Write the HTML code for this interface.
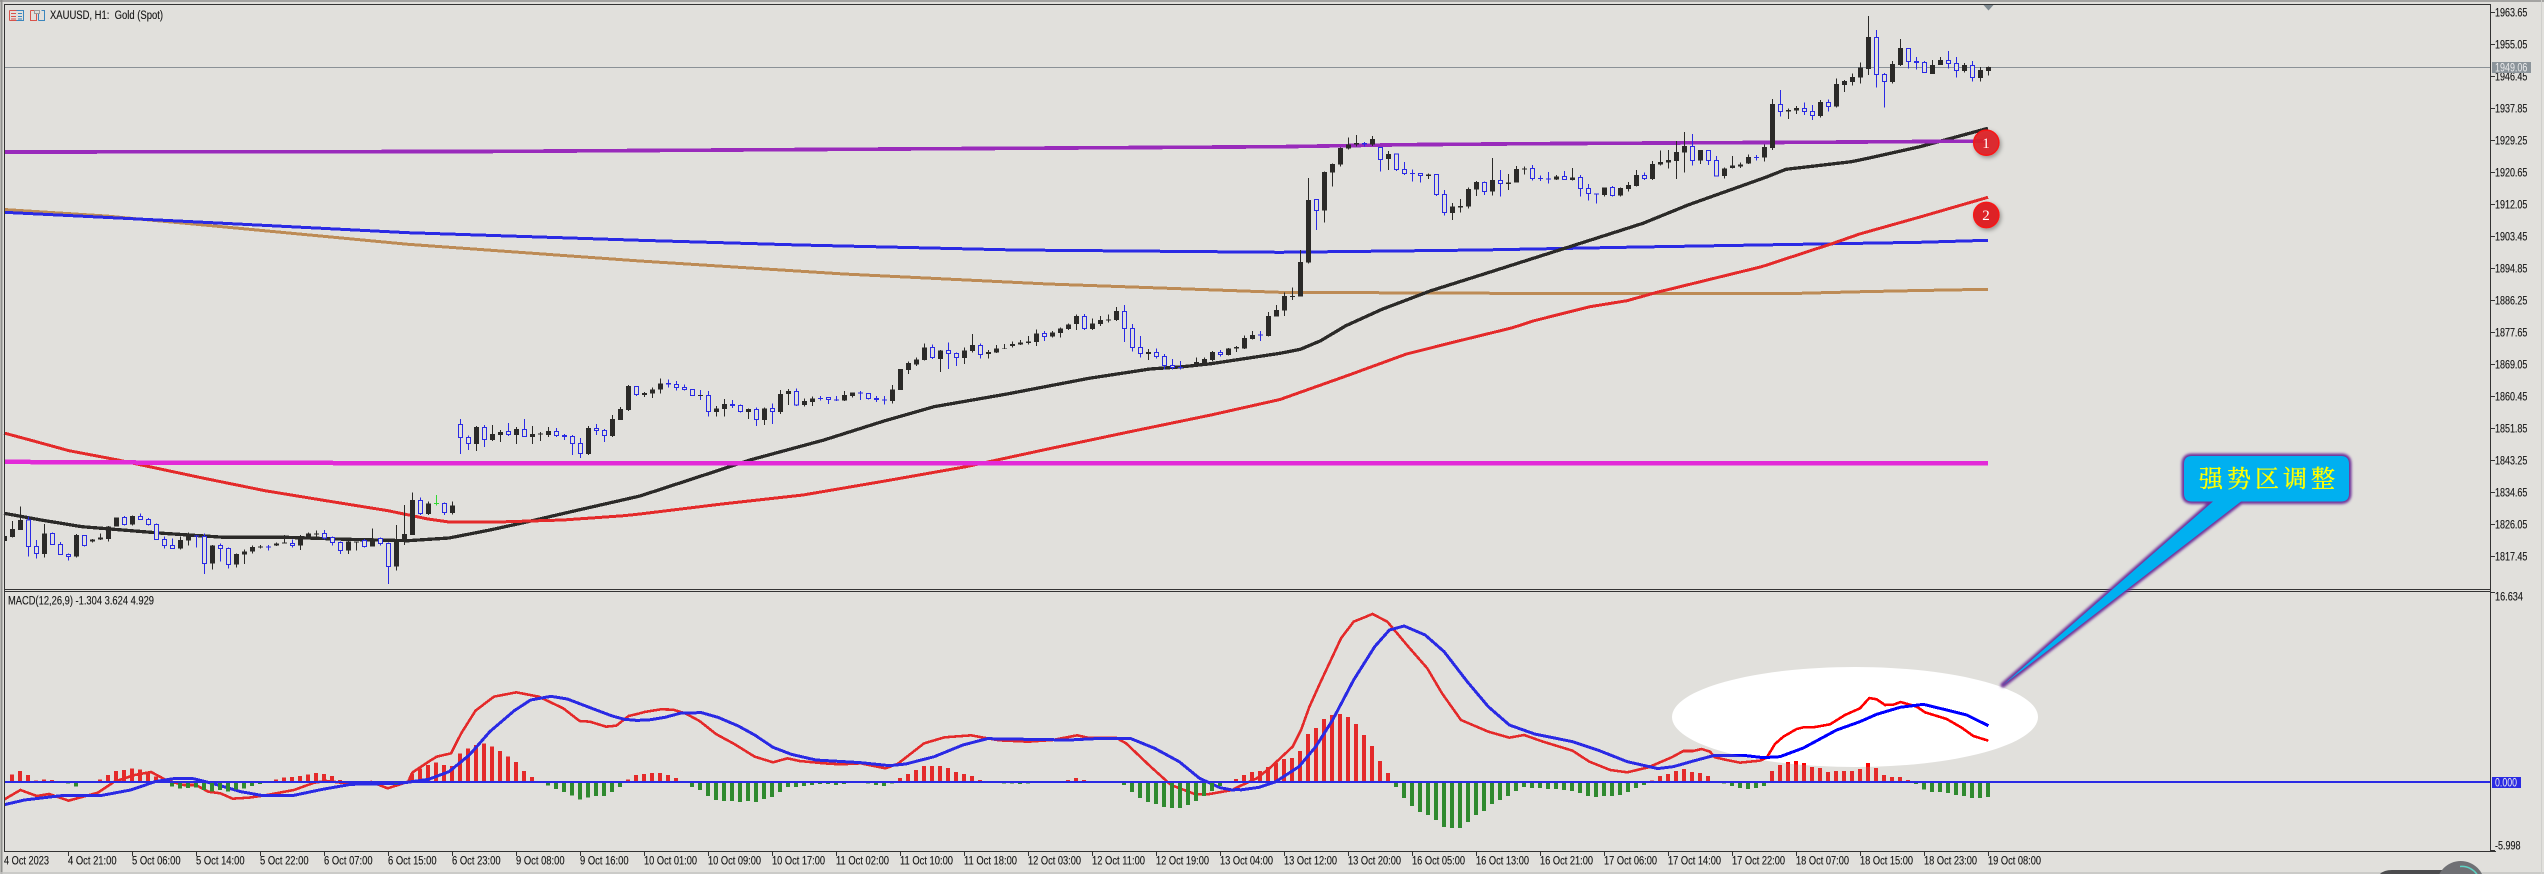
<!DOCTYPE html>
<html><head><meta charset="utf-8"><title>XAUUSD H1</title>
<style>
html,body{margin:0;padding:0;background:#e1e0dc;width:2544px;height:874px;overflow:hidden}
svg{display:block}
.c,.c *{vector-effect:non-scaling-stroke;shape-rendering:crispEdges}
.kw{stroke:#2b2a28;stroke-width:1;fill:none}
.kb{stroke:#2b2a28;stroke-width:5;fill:none}
.bw{stroke:#2a2ae4;stroke-width:1;fill:none}
.bs{stroke:#2a2ae4;stroke-width:5;fill:none}
.bh{stroke:#2a2ae4;stroke-width:1;fill:#e1e0dc}
.hr{stroke:var(--r,#e42a2a);stroke-width:4;fill:none}
.hg{stroke:#2f8a2f;stroke-width:4;fill:none}
.mr{stroke:var(--r,#e42a2a);stroke-width:2.6;fill:none;stroke-linejoin:round}
.mb{stroke:var(--b,#2a2ae4);stroke-width:3;fill:none;stroke-linejoin:round}
.ln{fill:none}
text{font-family:"Liberation Sans",sans-serif;font-size:11.5px;fill:#141414;stroke:#141414;stroke-width:.12}
.cn{font-family:"Liberation Serif","Noto Serif CJK SC",serif;font-size:24px;fill:#ffff00;stroke:#ffff00;stroke-width:.35;letter-spacing:4px}
</style></head>
<body>
<svg xmlns="http://www.w3.org/2000/svg" width="2544" height="874" viewBox="0 0 2544 874">
<defs>
<clipPath id="ec"><ellipse cx="1855" cy="717" rx="183" ry="50"/></clipPath>
<filter id="bl" x="-20%" y="-20%" width="140%" height="140%"><feGaussianBlur stdDeviation="1.2"/></filter>
<filter id="sh" x="-40%" y="-40%" width="180%" height="180%"><feDropShadow dx="1.5" dy="2" stdDeviation="2" flood-color="#000" flood-opacity=".35"/></filter>
</defs>
<rect width="2544" height="874" fill="#e1e0dc"/>
<!-- window edges -->
<path d="M0 1H2544" stroke="#a4a4a2" stroke-width="2"/>
<path d="M1.500 0V874" stroke="#8f8f8d" stroke-width="2"/>
<path d="M0 873H2544" stroke="#c4c4c2" stroke-width="1.5"/>
<path d="M2541.5 0V874" stroke="#cfcfcc" stroke-width="1"/>

<!-- white ellipse -->
<ellipse cx="1855" cy="717" rx="183" ry="50" fill="#fff"/>

<!-- current price line -->
<path class="c" d="M5 67.5H2490" stroke="#8a9196" stroke-width="1"/>

<!-- moving averages and horizontal lines -->
<g class="c">
<polyline class="ln" stroke="#bd8b55" stroke-width="3" points="4,209.5 106,216 204,225 408,244.3 640,261 844,274 1048,284 1280,292.3 1500,293.3 1800,293.3 1862,291.7 1920,290.5 1988,289.3"/>
<polyline class="ln" stroke="#2a2ae4" stroke-width="3" points="4,212.3 204,222.3 408,232.7 640,240.3 800,245 1016,250 1280,252.3 1480,250 1640,247 1800,244.3 1920,242.3 1988,240.3"/>
<polyline class="ln" stroke="#2b2a28" stroke-width="3.3" points="4,513.3 41,520 82,526.7 163,533.3 224,537.3 286,537.3 347,539.3 408,540.7 449,538 490,530 531,521 571,511.7 640,496 693,478.7 750,460 824,440 885,420.7 934,406.7 1007,394 1089,378.3 1150,369 1183,366.7 1211,363.7 1280,353.3 1300.4,349.3 1320.8,340.7 1345.3,326 1382,309.3 1431,290.7 1484,274 1561.6,249.3 1643,223.3 1688,205 1765.7,177.3 1786,169.3 1814.7,166 1851.4,161.7 1867.8,158.3 1920,146.7 1988,128.3"/>
<polyline class="ln" stroke="#e42a2a" stroke-width="3" points="4,433 30,440 69,450.7 118,460 204,478.3 265,490.7 326,500.7 388,510.7 428,519 449,522 498,522 563,520 624,515.7 640,514 722,504 803,495 885,481 966,466.7 1048,449 1130,431.7 1211,415 1280,399.5 1349,375 1406.5,354 1459.6,340.7 1512.6,327.7 1533,321 1590,306.7 1627,300.7 1655.5,292.7 1761.6,266.7 1831,244 1859.6,234 1920,217 1988,197.3"/>
<polyline class="ln" stroke="#992bbb" stroke-width="3.7" points="4,152 477,151.5 1280,146.7 1405,144.7 1533,143.7 1661,143 1805,142.3 1900,141.7 1988,141"/>
<polyline class="ln" stroke="#e22ad8" stroke-width="4.5" points="4,461.7 56,462.3 449,463.3 1988,463.5"/>
</g>

<!-- candles -->
<g class="c">
<rect x="5" y="536" width="2" height="5" fill="#2b2a28"/>
<g transform="translate(0 440) scale(1 .33333)">
<path class="kw" d="M12.5 243V293M20.5 200V270M44.5 252V352M76.5 282V352M92.5 297V308M100.5 280V300M108.5 258V305M132.5 226V256M180.5 290V328M188.5 277V317M212.5 315V388M236.5 340V382M244.5 328V372M252.5 316V340M260.5 315V325M276.5 308V318M284.5 285V310M300.5 285V330M308.5 277V294M316.5 272V290M348.5 295V342M356.5 305V332M372.5 265V320M396.5 255V392M404.5 195V315M412.5 157V285M428.5 185V225M452.5 185V224"/>
<path class="kb" d="M12.5 267V291M20.5 240V270M44.5 280V342M76.5 285V350M92.5 298V305M100.5 293V298M108.5 260V297M116.5 232V260M132.5 228V254M180.5 300V326M188.5 285V302M212.5 316V371M236.5 342V373M244.5 334V344M252.5 321V335M260.5 319V322M276.5 310V316M284.5 308V311M300.5 294V317M308.5 280V293M316.5 280V283M348.5 305V332M356.5 305V308M372.5 296V320M396.5 300V380M404.5 282V305M412.5 180V285M428.5 190V222M452.5 196V219"/>
<path class="bw" d="M28.5 230V350M36.5 300V355M52.5 278V315M60.5 306V345M68.5 340V362M84.5 285V320M124.5 228V256M140.5 220V240M148.5 234V256M156.5 250V300M164.5 290V325M172.5 295V326M196.5 285V323M204.5 280V402M220.5 310V365M228.5 322V385M268.5 315V332M292.5 298V322M324.5 270V298M332.5 290V317M340.5 305V342M364.5 297V322M380.5 292V316M388.5 308V432M420.5 172V225M444.5 187V225"/>
<path class="bs" d="M196.5 286V289M268.5 319V323"/>
<path class="bh" d="M26.5 240h4V320h-4zM34.5 319h4V341h-4zM50.5 280h4V314h-4zM58.5 313h4V344h-4zM66.5 343h4V350h-4zM82.5 287h4V317h-4zM122.5 232h4V254h-4zM138.5 230h4V238h-4zM146.5 238h4V254h-4zM154.5 253h4V298h-4zM162.5 298h4V316h-4zM170.5 316h4V325h-4zM202.5 290h4V370h-4zM218.5 316h4V325h-4zM226.5 325h4V373h-4zM290.5 311h4V317h-4zM322.5 281h4V294h-4zM330.5 293h4V307h-4zM338.5 307h4V331h-4zM362.5 301h4V319h-4zM378.5 296h4V311h-4zM386.5 310h4V380h-4zM418.5 182h4V221h-4zM442.5 191h4V217h-4z"/>
<path d="M436.5 165V197M434 190.5H439" stroke="#33d633" stroke-width="1" fill="none"/>
</g>
<g transform="translate(0 370) scale(1 .33333)">
<path class="kw" d="M476.5 168V243M492.5 165V213M500.5 180V216M516.5 171V222M532.5 168V222M540.5 186V213M548.5 171V201M588.5 168V255M612.5 135V201M620.5 111V150M628.5 45V123M644.5 66V81"/>
<path class="kb" d="M476.5 171V222M492.5 192V210M500.5 186V195M516.5 177V195M532.5 192V201M540.5 191V194M548.5 183V195M588.5 174V252M612.5 147V198M620.5 117V150M628.5 48V120M644.5 69V75"/>
<path class="bw" d="M460.5 147V252M468.5 197V240M484.5 165V231M508.5 159V198M524.5 147V201M556.5 174V201M564.5 192V210M572.5 195V255M580.5 204V264M596.5 162V195M604.5 177V216M636.5 48V78"/>
<path class="bs" d="M564.5 195V201"/>
<path class="bh" d="M458.5 163h4V203h-4zM466.5 202h4V221h-4zM482.5 172h4V209h-4zM506.5 184h4V194h-4zM522.5 178h4V200h-4zM554.5 184h4V197h-4zM570.5 199h4V221h-4zM578.5 220h4V251h-4zM594.5 175h4V182h-4zM602.5 181h4V197h-4zM634.5 49h4V74h-4z"/>
</g>
<g transform="translate(0 250) scale(1 .33333)">
<path class="kw" d="M652.5 413V444M660.5 385V431M716.5 468V500M724.5 447V500M748.5 475V507M764.5 472V525M780.5 420V492M788.5 417V465M804.5 445V470M812.5 440V468M844.5 423V453M852.5 427V443M892.5 405V461M908.5 335V372M916.5 323V348M924.5 280V332M940.5 300V366M964.5 292V342M972.5 252V308M988.5 300V326M996.5 285V309M1004.5 282V297M1012.5 274V293M1020.5 270V285M1028.5 258V284M1036.5 238V288M1052.5 243V262M1060.5 232V262M1068.5 220V240M1076.5 193V240M1092.5 205V240M1100.5 198V228M1108.5 193V218M1116.5 171V213M1148.5 297V330M1196.5 322V345M1204.5 322V340M1212.5 303V335M1228.5 294V316M1236.5 288V306M1244.5 257V297M1252.5 243V268M1268.5 186V260M1276.5 165V200"/>
<path class="kb" d="M652.5 418V431M660.5 400V419M716.5 475V486M724.5 462V477M748.5 477V486M764.5 475V510M780.5 432V486M788.5 423V432M804.5 453V465M812.5 445V456M844.5 435V452M852.5 427V438M892.5 418V453M900.5 357V420M908.5 339V360M916.5 328V343M924.5 292V330M940.5 301V327M964.5 301V324M972.5 285V303M988.5 306V312M996.5 295V308M1004.5 294V296M1012.5 282V288M1020.5 277V284M1028.5 274V279M1036.5 250V276M1052.5 247V260M1060.5 235V249M1068.5 223V237M1076.5 198V222M1092.5 220V237M1100.5 210V222M1108.5 208V212M1116.5 183V210M1148.5 306V312M1196.5 336V345M1204.5 327V339M1212.5 306V330M1228.5 295V315M1236.5 291V295M1244.5 264V296M1252.5 255V267M1268.5 198V258M1276.5 180V200"/>
<path class="bw" d="M668.5 388V412M676.5 393V422M684.5 403V422M700.5 420V450M708.5 423V500M732.5 450V474M740.5 463V488M756.5 472V528M772.5 460V522M796.5 415V468M820.5 438V452M828.5 442V462M836.5 438V453M860.5 423V450M868.5 430V449M876.5 438V456M884.5 438V464M932.5 283V327M948.5 277V357M956.5 308V348M980.5 280V326M1044.5 243V273M1084.5 192V240M1124.5 165V276M1132.5 222V305M1140.5 258V322M1156.5 295V326M1164.5 312V358M1172.5 327V358M1180.5 333V358M1220.5 300V320M1260.5 243V273"/>
<path class="bs" d="M668.5 399V404M732.5 462V468M820.5 444V447M836.5 448V452M860.5 427V431M876.5 444V450M884.5 448V452M1180.5 351V354M1260.5 254V257"/>
<path d="M698 436.5H703" stroke="#2b2a28" stroke-width="1" fill="none"/>
<path class="bh" d="M674.5 403h4V413h-4zM682.5 412h4V419h-4zM690.5 418h4V437h-4zM706.5 436h4V485h-4zM738.5 467h4V485h-4zM754.5 478h4V509h-4zM770.5 475h4V485h-4zM794.5 424h4V465h-4zM826.5 443h4V449h-4zM866.5 431h4V446h-4zM930.5 293h4V323h-4zM946.5 301h4V311h-4zM954.5 311h4V322h-4zM978.5 287h4V314h-4zM1042.5 250h4V260h-4zM1082.5 199h4V236h-4zM1122.5 184h4V236h-4zM1130.5 235h4V293h-4zM1138.5 292h4V310h-4zM1154.5 307h4V320h-4zM1162.5 320h4V347h-4zM1170.5 347h4V353h-4zM1218.5 307h4V314h-4z"/>
</g>
<g transform="translate(0 100) scale(1 .33333)">
<path class="kw" d="M1284.5 578V648M1292.5 562V600M1300.5 450V590M1308.5 234V490M1324.5 215V368M1332.5 190V260M1340.5 143V200M1348.5 113V148M1356.5 105V140M1372.5 108V138M1388.5 153V210M1428.5 220V237M1452.5 309V360M1460.5 297V338M1468.5 263V326M1476.5 243V288M1492.5 174V287M1508.5 222V270M1516.5 198V248M1524.5 200V224M1556.5 225V240M1572.5 204V242M1604.5 262V289M1620.5 263V290M1628.5 246V275M1636.5 210V260M1652.5 183V240M1660.5 152V197M1668.5 150V205M1676.5 123V237M1684.5 96V218M1700.5 150V192M1724.5 203V236M1732.5 168V205M1740.5 188V204M1748.5 163V192M1764.5 133V185"/>
<path class="kb" d="M1284.5 588V632M1292.5 588V591M1300.5 486V590M1308.5 300V488M1324.5 216V332M1332.5 192V218M1340.5 144V194M1348.5 133V146M1356.5 129V134M1372.5 117V134M1388.5 162V177M1428.5 223V228M1452.5 320V339M1460.5 318V323M1468.5 267V320M1476.5 246V269M1492.5 240V275M1508.5 247V252M1516.5 207V248M1524.5 205V209M1556.5 229V239M1572.5 232V240M1604.5 262V285M1620.5 264V287M1628.5 255V267M1636.5 225V258M1652.5 192V237M1660.5 186V194M1668.5 180V188M1676.5 156V183M1684.5 138V158M1700.5 150V182M1724.5 205V228M1732.5 196V204M1740.5 193V199M1748.5 171V191M1764.5 141V173"/>
<path class="bw" d="M1316.5 297V390M1364.5 126V140M1380.5 142V215M1396.5 160V213M1404.5 186V225M1412.5 208V245M1420.5 220V248M1436.5 222V288M1444.5 270V347M1484.5 244V285M1500.5 210V290M1532.5 195V242M1540.5 227V243M1548.5 216V250M1564.5 213V240M1580.5 225V290M1588.5 252V302M1596.5 280V311M1612.5 258V290M1644.5 218V240M1692.5 102V197M1708.5 150V195M1716.5 168V230M1756.5 165V182"/>
<path class="bs" d="M1364.5 129V134M1412.5 219V222M1540.5 234V237M1548.5 235V239M1596.5 280V284M1756.5 171V174"/>
<path class="bh" d="M1314.5 298h4V332h-4zM1378.5 143h4V179h-4zM1394.5 162h4V209h-4zM1402.5 208h4V221h-4zM1418.5 220h4V227h-4zM1434.5 223h4V284h-4zM1442.5 283h4V338h-4zM1482.5 247h4V275h-4zM1498.5 241h4V251h-4zM1530.5 205h4V236h-4zM1562.5 229h4V239h-4zM1578.5 232h4V266h-4zM1586.5 265h4V281h-4zM1610.5 262h4V287h-4zM1642.5 226h4V236h-4zM1690.5 139h4V182h-4zM1706.5 151h4V181h-4zM1714.5 181h4V228h-4z"/>
</g>
<g transform="translate(0 5) scale(1 .33333)">
<path class="kw" d="M1772.5 282V435M1788.5 310V342M1796.5 303V327M1820.5 285V338M1836.5 220V308M1844.5 225V261M1852.5 205V242M1860.5 172V236M1868.5 33V210M1892.5 168V236M1900.5 102V183M1932.5 165V207M1940.5 156V180M1964.5 174V203M1980.5 186V230M1988.5 184V212"/>
<path class="kb" d="M1772.5 297V429M1788.5 315V320M1796.5 309V317M1820.5 291V333M1836.5 237V305M1844.5 228V240M1852.5 216V231M1860.5 187V218M1868.5 96V192M1892.5 177V231M1900.5 129V180M1932.5 180V207M1940.5 165V180M1964.5 180V198M1980.5 195V219M1988.5 186V198"/>
<path class="bw" d="M1780.5 255V335M1804.5 292V330M1812.5 300V345M1828.5 284V320M1876.5 75V248M1884.5 204V308M1908.5 130V191M1916.5 156V194M1924.5 168V203M1948.5 138V191M1956.5 156V218M1972.5 168V230"/>
<path class="bs" d="M1916.5 168V174"/>
<path class="bh" d="M1778.5 298h4V320h-4zM1802.5 310h4V320h-4zM1810.5 320h4V332h-4zM1826.5 292h4V304h-4zM1874.5 97h4V208h-4zM1882.5 208h4V230h-4zM1906.5 130h4V170h-4zM1922.5 172h4V203h-4zM1946.5 166h4V176h-4zM1954.5 175h4V197h-4zM1970.5 181h4V218h-4z"/>
</g>
</g>

<!-- MACD histogram and lines -->
<g class="c" id="macd">
<g transform="translate(0 440) scale(1 .33333)">
<path class="hr" d="M12 1026V1003M20 1026V993M28 1026V1005M36 1026V1021M44 1026V1018M52 1026V1020M60 1026V1023M100 1026V1018M108 1026V1005M116 1026V993M124 1026V990M132 1026V985M140 1026V988M148 1026V995M156 1026V1010M164 1026V1023M276 1026V1018M284 1026V1013M292 1026V1011M300 1026V1008M308 1026V1003M316 1026V999M324 1026V1002M332 1026V1008M340 1026V1020M348 1026V1024M356 1026V1024M364 1026V1024M372 1026V1024M380 1026V1024M404 1026V1025M412 1026V1000M420 1026V985M428 1026V975M436 1026V968M444 1026V975M452 1026V978M460 1026V940M468 1026V925M476 1026V915M484 1026V910M492 1026V920M500 1026V933M508 1026V950M516 1026V966M524 1026V993M532 1026V1011M628 1026V1018M636 1026V1005"/>
</g>
<g transform="translate(0 640) scale(1 .33333)">
<path class="hr" d="M644 426V402M652 426V399M660 426V399M668 426V405M676 426V414M684 426V424M900 426V414M908 426V402M916 426V390M924 426V378M932 426V378M940 426V378M948 426V384M956 426V396M964 426V402M972 426V408M980 426V420M1052 426V424M1060 426V423M1068 426V420M1076 426V414M1084 426V420M1092 426V423M1100 426V423M1108 426V423M1116 426V423M1236 426V417"/>
</g>
<g transform="translate(0 590) scale(1 .33333)">
<path class="hr" d="M1244 576V555M1252 576V546M1260 576V543M1268 576V531M1276 576V519M1284 576V507M1292 576V504M1300 576V483M1308 576V432M1316 576V414M1324 576V387M1332 576V375M1340 576V372M1348 576V381M1356 576V402M1364 576V435M1372 576V468M1380 576V513M1388 576V549M1652 576V571M1660 576V558M1668 576V552M1676 576V543M1684 576V537M1692 576V546M1700 576V549M1708 576V558M1716 576V574M1772 576V543M1780 576V525M1788 576V516M1796 576V513M1804 576V519M1812 576V531M1820 576V534M1828 576V546M1836 576V543M1844 576V543M1852 576V543M1860 576V537M1868 576V519M1876 576V534M1884 576V555M1892 576V561M1900 576V561M1908 576V570"/>
</g>
<g transform="translate(0 440) scale(.40816 .33333)">
<path class="mr" d="M11 1078L50 1050L90 1068L120 1062L168 1082L210 1068L240 1058L280 1025L330 1005L370 996L410 1022L450 1035L480 1035L510 1055L540 1060L570 1076L610 1073L650 1066L720 1050L770 1028L800 1023L850 1030L910 1026L950 1045L1000 1025L1010 998L1050 965L1070 950L1105 940L1130 880L1165 812L1210 770L1265 757L1320 770L1380 805L1420 843L1445 845L1485 860L1510 857L1540 828L1568 820"/>
</g>
<g transform="translate(620 640) scale(.40816 .33333)">
<path class="mr" d="M49 220L60 216L100 208L130 209L160 220L195 243L235 282L280 312L330 350L375 367L410 355L440 363L500 370L540 373L590 370L650 385L680 372L745 310L795 292L860 286L900 295L930 301L1000 305L1060 300L1120 286L1150 294L1215 293L1240 310L1300 380L1350 435L1410 463L1440 463L1500 450L1519 438"/>
</g>
<g transform="translate(1240 590) scale(.42088 .33333)">
<path class="mr" d="M0 588L40 565L70 535L125 470L145 420L165 350L190 280L240 145L270 95L315 72L350 95L400 170L445 235L480 310L525 390L590 425L640 443L675 435L720 455L790 482L830 515L880 540L920 547L970 532L998 517"/>
</g>
<g transform="translate(1660 660) scale(.33333)">
<path class="mr" d="M0 307L35 292L70 273L100 273L125 267L150 275L165 292L200 300L240 308L300 302L320 293L345 252L370 230L410 207L430 202L460 202L510 193L555 165L600 145L628 114L650 118L675 135L700 134L722 126L770 140L795 157L860 177L905 203L940 228L985 242"/>
</g>
<g transform="translate(0 440) scale(.40816 .33333)">
<path class="mb" d="M11 1094L60 1080L150 1067L250 1066L320 1050L380 1025L430 1015L470 1015L520 1030L590 1055L640 1066L720 1066L790 1048L860 1033L980 1030L1050 1018L1100 995L1150 945L1200 875L1260 812L1300 780L1350 769L1390 777L1450 805L1500 828L1530 838L1568 842"/>
</g>
<g transform="translate(620 640) scale(.40816 .33333)">
<path class="mb" d="M49 240L70 240L110 232L150 219L200 218L240 232L290 258L330 285L375 322L420 343L480 360L590 368L660 377L700 372L770 350L840 315L900 296L1000 298L1100 300L1180 295L1250 295L1310 325L1370 365L1420 415L1470 443L1500 450L1519 448"/>
</g>
<g transform="translate(1240 590) scale(.42088 .33333)">
<path class="mb" d="M0 600L45 592L85 575L140 530L180 470L220 390L270 270L320 170L355 120L390 108L440 135L485 185L540 275L590 350L640 405L700 432L790 455L850 480L920 515L990 535L998 535"/>
</g>
<g transform="translate(1660 660) scale(.33333)">
<path class="mb" d="M0 325L40 320L100 303L160 287L250 286L310 293L360 290L430 264L530 210L600 185L650 163L720 142L790 133L860 150L920 165L985 197"/>
</g>
</g>
<g clip-path="url(#ec)"><use href="#macd" style="--r:#ff0000;--b:#0000ff"/></g>
<g class="c">
<g transform="translate(0 440) scale(1 .33333)">
<path class="hg" d="M68 1026V1031M76 1026V1040M84 1026V1029M92 1026V1029M172 1026V1040M180 1026V1046M188 1026V1044M196 1026V1042M204 1026V1050M212 1026V1055M220 1026V1050M228 1026V1055M236 1026V1048M244 1026V1046M252 1026V1038M260 1026V1032M268 1026V1028M388 1026V1029M396 1026V1030M540 1026V1029M548 1026V1037M556 1026V1047M564 1026V1056M572 1026V1067M580 1026V1079M588 1026V1073M596 1026V1068M604 1026V1068M612 1026V1056M620 1026V1041"/>
</g>
<g transform="translate(0 640) scale(1 .33333)">
<path class="hg" d="M692 426V441M700 426V450M708 426V468M716 426V480M724 426V483M732 426V483M740 426V486M748 426V483M756 426V486M764 426V477M772 426V471M780 426V456M788 426V441M796 426V441M804 426V438M812 426V435M820 426V432M828 426V432M836 426V435M844 426V432M852 426V428M860 426V427M868 426V431M876 426V435M884 426V438M892 426V431M988 426V428M996 426V428M1004 426V431M1012 426V431M1020 426V432M1028 426V431M1036 426V428M1044 426V428M1124 426V435M1132 426V456M1140 426V474M1148 426V486M1156 426V492M1164 426V501M1172 426V504M1180 426V504M1188 426V495M1196 426V483M1204 426V468M1212 426V453M1220 426V438M1228 426V428"/>
</g>
<g transform="translate(0 590) scale(1 .33333)">
<path class="hg" d="M1396 576V591M1404 576V624M1412 576V648M1420 576V666M1428 576V675M1436 576V690M1444 576V711M1452 576V714M1460 576V714M1468 576V696M1476 576V675M1484 576V663M1492 576V642M1500 576V630M1508 576V618M1516 576V603M1524 576V591M1532 576V594M1540 576V594M1548 576V597M1556 576V597M1564 576V600M1572 576V603M1580 576V609M1588 576V618M1596 576V621M1604 576V618M1612 576V618M1620 576V615M1628 576V606M1636 576V594M1644 576V585M1724 576V580M1732 576V588M1740 576V594M1748 576V597M1756 576V594M1764 576V588M1772 576V579M1916 576V582M1924 576V598M1932 576V606M1940 576V606M1948 576V609M1956 576V615M1964 576V618M1972 576V624M1980 576V624M1988 576V621"/>
</g>
<path d="M5 782H2490" stroke="#2a2ae4" stroke-width="2"/>
</g>

<!-- frame -->
<g class="c" fill="none" stroke="#333" stroke-width="1">
<path d="M4.5 4.5H2490.5M4.5 4V852M2490.5 4V852M4.5 589.5H2490M4.5 591.5H2490M4.5 851.5H2496"/>
<path d="M2490 12.500h5M2490 44.5h5M2490 76.5h5M2490 108.5h5M2490 140.5h5M2490 172.5h5M2490 204.5h5M2490 236.5h5M2490 268.5h5M2490 300.5h5M2490 332.5h5M2490 364.5h5M2490 396.5h5M2490 428.5h5M2490 460.5h5M2490 492.5h5M2490 524.5h5M2490 556.5h5M2490 592.5h5M2490 850.5h5M68.5 852v4M132.5 852v4M196.5 852v4M260.5 852v4M324.5 852v4M388.5 852v4M452.5 852v4M516.5 852v4M580.5 852v4M644.5 852v4M708.5 852v4M772.5 852v4M836.5 852v4M900.5 852v4M964.5 852v4M1028.5 852v4M1092.5 852v4M1156.5 852v4M1220.5 852v4M1284.5 852v4M1348.5 852v4M1412.5 852v4M1476.5 852v4M1540.5 852v4M1604.5 852v4M1668.5 852v4M1732.5 852v4M1796.5 852v4M1860.5 852v4M1924.5 852v4M1988.5 852v4"/>
</g>
<path d="M1983.5 5H1993.5L1988.500 10.500Z" fill="#7f8a90"/>

<!-- price axis -->
<g>
<text x="2495" y="16.5" textLength="32.4" lengthAdjust="spacingAndGlyphs">1963.65</text>
<text x="2495" y="48.5" textLength="32.4" lengthAdjust="spacingAndGlyphs">1955.05</text>
<text x="2495" y="80.5" textLength="32.4" lengthAdjust="spacingAndGlyphs">1946.45</text>
<text x="2495" y="112.5" textLength="32.4" lengthAdjust="spacingAndGlyphs">1937.85</text>
<text x="2495" y="144.5" textLength="32.4" lengthAdjust="spacingAndGlyphs">1929.25</text>
<text x="2495" y="176.5" textLength="32.4" lengthAdjust="spacingAndGlyphs">1920.65</text>
<text x="2495" y="208.5" textLength="32.4" lengthAdjust="spacingAndGlyphs">1912.05</text>
<text x="2495" y="240.5" textLength="32.4" lengthAdjust="spacingAndGlyphs">1903.45</text>
<text x="2495" y="272.5" textLength="32.4" lengthAdjust="spacingAndGlyphs">1894.85</text>
<text x="2495" y="304.5" textLength="32.4" lengthAdjust="spacingAndGlyphs">1886.25</text>
<text x="2495" y="336.5" textLength="32.4" lengthAdjust="spacingAndGlyphs">1877.65</text>
<text x="2495" y="368.5" textLength="32.4" lengthAdjust="spacingAndGlyphs">1869.05</text>
<text x="2495" y="400.5" textLength="32.4" lengthAdjust="spacingAndGlyphs">1860.45</text>
<text x="2495" y="432.5" textLength="32.4" lengthAdjust="spacingAndGlyphs">1851.85</text>
<text x="2495" y="464.5" textLength="32.4" lengthAdjust="spacingAndGlyphs">1843.25</text>
<text x="2495" y="496.5" textLength="32.4" lengthAdjust="spacingAndGlyphs">1834.65</text>
<text x="2495" y="528.5" textLength="32.4" lengthAdjust="spacingAndGlyphs">1826.05</text>
<text x="2495" y="560.5" textLength="32.4" lengthAdjust="spacingAndGlyphs">1817.45</text>
<rect x="2492" y="62" width="39" height="11" fill="#8b949a"/>
<text x="2495" y="71.500" textLength="32.4" lengthAdjust="spacingAndGlyphs" style="fill:#ececec;stroke:none">1949.06</text>
<text x="2495" y="600.5" textLength="28" lengthAdjust="spacingAndGlyphs">16.634</text>
<text x="2495" y="849.5" textLength="25.5" lengthAdjust="spacingAndGlyphs">-5.998</text>
<rect x="2492" y="777" width="29" height="11" fill="#2a2ae4"/>
<text x="2495" y="786.5" textLength="22" lengthAdjust="spacingAndGlyphs" style="fill:#ececec;stroke:none">0.000</text>
</g>

<!-- time axis -->
<g>
<text x="4" y="864.5" textLength="45" lengthAdjust="spacingAndGlyphs">4 Oct 2023</text>
<text x="68" y="864.5" textLength="48.6" lengthAdjust="spacingAndGlyphs">4 Oct 21:00</text>
<text x="132" y="864.5" textLength="48.6" lengthAdjust="spacingAndGlyphs">5 Oct 06:00</text>
<text x="196" y="864.5" textLength="48.6" lengthAdjust="spacingAndGlyphs">5 Oct 14:00</text>
<text x="260" y="864.5" textLength="48.6" lengthAdjust="spacingAndGlyphs">5 Oct 22:00</text>
<text x="324" y="864.5" textLength="48.6" lengthAdjust="spacingAndGlyphs">6 Oct 07:00</text>
<text x="388" y="864.5" textLength="48.6" lengthAdjust="spacingAndGlyphs">6 Oct 15:00</text>
<text x="452" y="864.5" textLength="48.6" lengthAdjust="spacingAndGlyphs">6 Oct 23:00</text>
<text x="516" y="864.5" textLength="48.6" lengthAdjust="spacingAndGlyphs">9 Oct 08:00</text>
<text x="580" y="864.5" textLength="48.6" lengthAdjust="spacingAndGlyphs">9 Oct 16:00</text>
<text x="644" y="864.5" textLength="53" lengthAdjust="spacingAndGlyphs">10 Oct 01:00</text>
<text x="708" y="864.5" textLength="53" lengthAdjust="spacingAndGlyphs">10 Oct 09:00</text>
<text x="772" y="864.5" textLength="53" lengthAdjust="spacingAndGlyphs">10 Oct 17:00</text>
<text x="836" y="864.5" textLength="53" lengthAdjust="spacingAndGlyphs">11 Oct 02:00</text>
<text x="900" y="864.5" textLength="53" lengthAdjust="spacingAndGlyphs">11 Oct 10:00</text>
<text x="964" y="864.5" textLength="53" lengthAdjust="spacingAndGlyphs">11 Oct 18:00</text>
<text x="1028" y="864.5" textLength="53" lengthAdjust="spacingAndGlyphs">12 Oct 03:00</text>
<text x="1092" y="864.5" textLength="53" lengthAdjust="spacingAndGlyphs">12 Oct 11:00</text>
<text x="1156" y="864.5" textLength="53" lengthAdjust="spacingAndGlyphs">12 Oct 19:00</text>
<text x="1220" y="864.5" textLength="53" lengthAdjust="spacingAndGlyphs">13 Oct 04:00</text>
<text x="1284" y="864.5" textLength="53" lengthAdjust="spacingAndGlyphs">13 Oct 12:00</text>
<text x="1348" y="864.5" textLength="53" lengthAdjust="spacingAndGlyphs">13 Oct 20:00</text>
<text x="1412" y="864.5" textLength="53" lengthAdjust="spacingAndGlyphs">16 Oct 05:00</text>
<text x="1476" y="864.5" textLength="53" lengthAdjust="spacingAndGlyphs">16 Oct 13:00</text>
<text x="1540" y="864.5" textLength="53" lengthAdjust="spacingAndGlyphs">16 Oct 21:00</text>
<text x="1604" y="864.5" textLength="53" lengthAdjust="spacingAndGlyphs">17 Oct 06:00</text>
<text x="1668" y="864.5" textLength="53" lengthAdjust="spacingAndGlyphs">17 Oct 14:00</text>
<text x="1732" y="864.5" textLength="53" lengthAdjust="spacingAndGlyphs">17 Oct 22:00</text>
<text x="1796" y="864.5" textLength="53" lengthAdjust="spacingAndGlyphs">18 Oct 07:00</text>
<text x="1860" y="864.5" textLength="53" lengthAdjust="spacingAndGlyphs">18 Oct 15:00</text>
<text x="1924" y="864.5" textLength="53" lengthAdjust="spacingAndGlyphs">18 Oct 23:00</text>
<text x="1988" y="864.5" textLength="53" lengthAdjust="spacingAndGlyphs">19 Oct 08:00</text>
</g>

<!-- legends -->
<g fill="none" shape-rendering="crispEdges">
<path d="M9.5 10.5H16.5M9.5 20.5H16.5M9.500 10.5V20.5M11 13.5H16M11 16.5H16M11 19H16" stroke="#d9534a"/>
<path d="M16.5 10.5H23.500V20.5H16.5M18 13.5H22M18 16.5H22M18 19H22" stroke="#3b86bd"/>
<path d="M30.5 10.5H36.5M30.5 10.5V20.5H36.5V14" stroke="#d9534a"/>
<path d="M38.5 20.5H44.500V10.5H41.5M38.5 14V20.5" stroke="#3b86bd"/>
<rect x="34.5" y="10.5" width="5" height="3" stroke="#9a9a9a"/>
</g>
<text x="50" y="19" textLength="113" lengthAdjust="spacingAndGlyphs" xml:space="preserve">XAUUSD, H1:  Gold (Spot)</text>
<text x="8" y="604.5" textLength="146" lengthAdjust="spacingAndGlyphs">MACD(12,26,9) -1.304 3.624 4.929</text>

<!-- numbered markers -->
<g filter="url(#sh)">
<circle cx="1986.3" cy="142.7" r="12.6" fill="#dd2328" fill-opacity=".93" stroke="#f81414" stroke-width="1.5"/>
<circle cx="1986.3" cy="215" r="12.6" fill="#dd2328" stroke="#f81414" stroke-width="1.5"/>
</g>
<text x="1986" y="147.8" text-anchor="middle" style="fill:#fff;stroke:none;font-family:'Liberation Serif',serif;font-size:15px">1</text>
<text x="1986" y="220" text-anchor="middle" style="fill:#fff;stroke:none;font-family:'Liberation Serif',serif;font-size:15px">2</text>

<!-- callout -->
<path d="M2192 456H2341Q2349 456 2349 464V493.5Q2349 501.5 2341 501.5H2241L2003 685L2213 501.5H2192Q2184 501.5 2184 493.5V464Q2184 456 2192 456Z" fill="#6f3399" stroke="#6f3399" stroke-width="5" stroke-linejoin="round" filter="url(#bl)"/>
<path d="M2192 456H2341Q2349 456 2349 464V493.5Q2349 501.5 2341 501.5H2241L2003 685L2213 501.5H2192Q2184 501.5 2184 493.5V464Q2184 456 2192 456Z" fill="#00b0f0"/>
<text class="cn" x="2199" y="487">强势区调整</text>

<!-- bottom-right gadget -->
<path d="M2380 874Q2384 870 2392 870H2450V874Z" fill="#4c4c4e"/>
<circle cx="2460.7" cy="885" r="24" fill="#6f7074"/>
<path d="M2460 866.5A18.5 18.5 0 0 1 2478 876" fill="none" stroke="#5fd3c4" stroke-width="1.5"/>
</svg>
</body></html>
